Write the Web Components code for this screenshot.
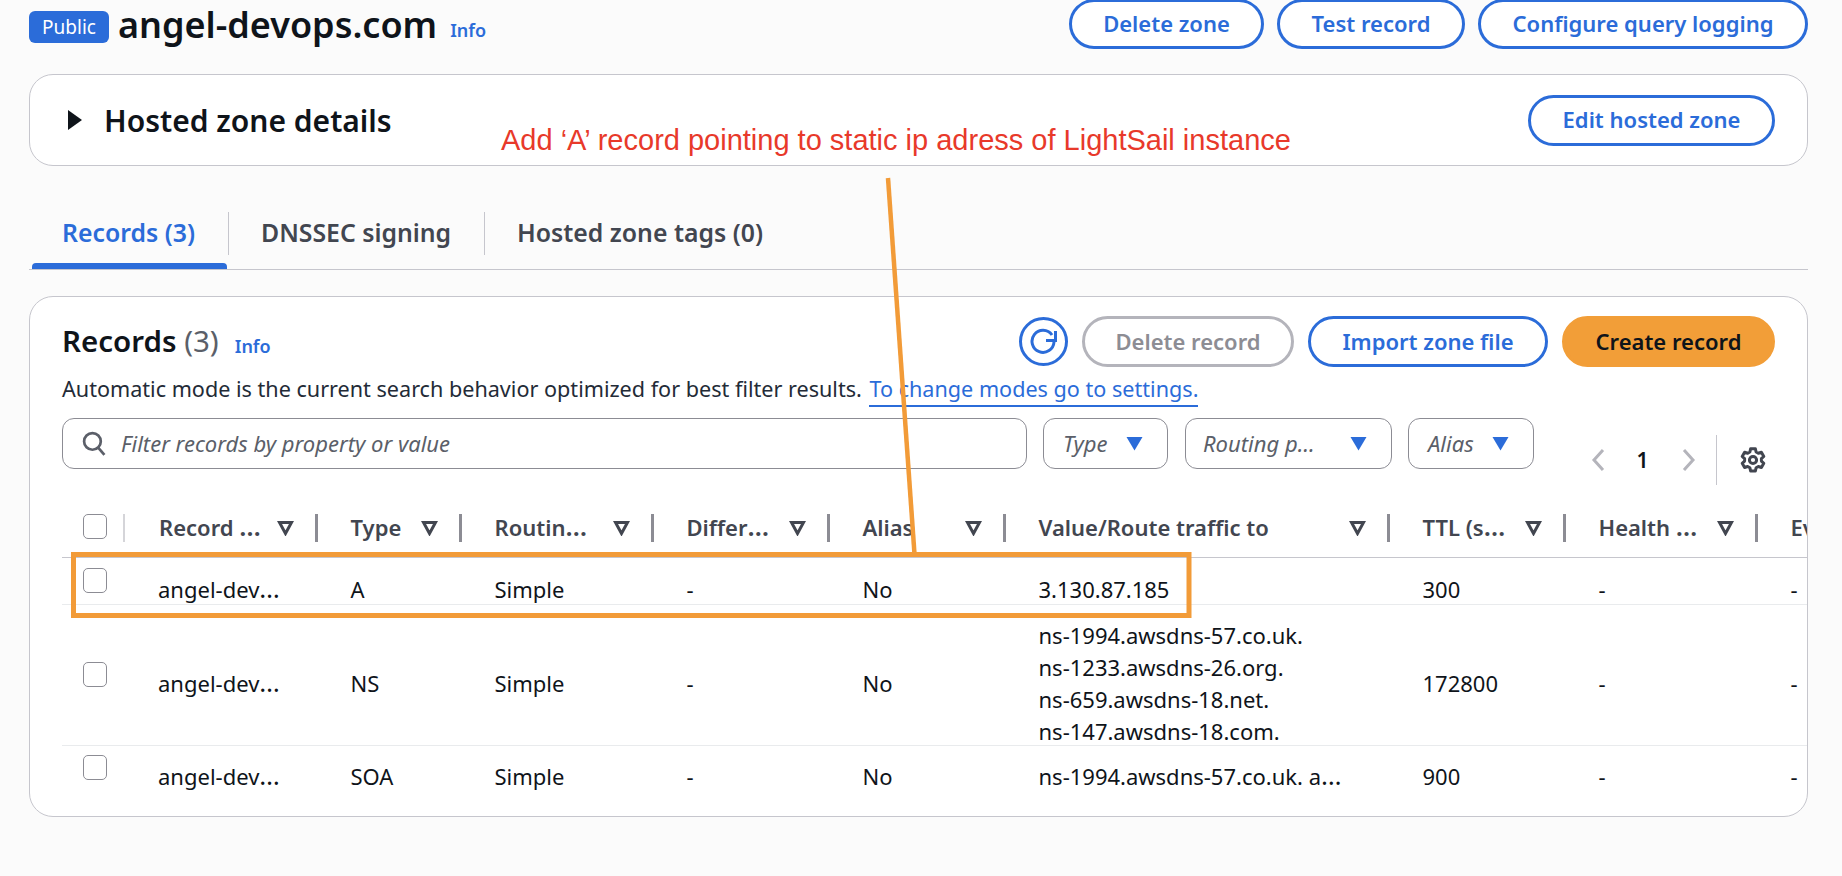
<!DOCTYPE html>
<html>
<head>
<meta charset="utf-8">
<style>
  html, body { margin: 0; height: 876px; overflow: hidden; background: #fbfbfb; }
  body { font-family: "Noto Sans", sans-serif; color: #0f141a; position: relative; }
  main { display: block; padding: 0 34px 0 29px; }
</style>
</head>
<body>
<main>
  <zone-header></zone-header>
  <zone-details></zone-details>
  <zone-tabs></zone-tabs>
  <records-card></records-card>
</main>
<route-note></route-note>

<script>
const blue = "#2b6cd9";

class AwsButton extends HTMLElement {
  constructor() {
    super();
    const shadow = this.attachShadow({ mode: "open" });
    shadow.innerHTML = `
      <style>
        :host {
          display: inline-flex;
          align-items: center;
          justify-content: center;
          box-sizing: border-box;
          height: var(--btn-h, 51px);
          padding-bottom: 2px;
          border: 3px solid ${blue};
          border-radius: 26px;
          background: #fff;
          color: ${blue};
          font-size: 22px;
          font-weight: 600;
          white-space: nowrap;
        }
        :host([kind="disabled"]) { border-color: #b4b4bb; color: #8d8d94; }
        :host([kind="primary"]) { border-color: #f29e38; background: #f29e38; color: #0f141a; }
      </style>
      <slot></slot>
    `;
  }
}

class AwsInfo extends HTMLElement {
  constructor() {
    super();
    this.attachShadow({ mode: "open" }).innerHTML = `
      <style>
        :host { display: inline-block; color: ${blue}; font-size: 18px; font-weight: 600; }
      </style>
      <slot>Info</slot>
    `;
  }
}

class ZoneHeader extends HTMLElement {
  constructor() {
    super();
    this.attachShadow({ mode: "open" }).innerHTML = `
      <style>
        :host { display: flex; align-items: flex-start; height: 74px; }
        .badge {
          width: 80px; height: 32px; margin-top: 11px;
          background: ${blue}; color: #fff; border-radius: 6px;
          display: flex; align-items: center; justify-content: center;
          font-size: 19px;
        }
        h1 { margin: 0 13px 0 9px; font-size: 36px; font-weight: 600; line-height: 50px; white-space: nowrap; }
        aws-info { margin-top: 18px; }
        .actions { margin-left: auto; display: flex; gap: 13px; margin-top: -1px; --btn-h: 50px; }
      </style>
      <span class="badge">Public</span>
      <h1>angel-devops.com</h1>
      <aws-info></aws-info>
      <div class="actions">
        <aws-button style="width:195px">Delete zone</aws-button>
        <aws-button style="width:188px">Test record</aws-button>
        <aws-button style="width:330px">Configure query logging</aws-button>
      </div>
    `;
  }
}

class ZoneDetails extends HTMLElement {
  constructor() {
    super();
    this.attachShadow({ mode: "open" }).innerHTML = `
      <style>
        :host {
          display: flex; align-items: center; box-sizing: border-box;
          height: 92px; padding: 0 32px 0 37px;
          background: #fff; border: 1px solid #c6c6cd; border-radius: 24px;
        }
        svg { width: 16px; height: 20px; margin-right: 21px; }
        h2 { margin: 0; font-size: 30px; font-weight: 600; }
        aws-button { margin-left: auto; width: 247px; }
      </style>
      <svg viewBox="0 0 16 20"><path d="M1 0 15 10 1 20z" fill="#0f141a"/></svg>
      <h2>Hosted zone details</h2>
      <aws-button>Edit hosted zone</aws-button>
    `;
  }
}

class ZoneTabs extends HTMLElement {
  constructor() {
    super();
    this.attachShadow({ mode: "open" }).innerHTML = `
      <style>
        :host {
          display: flex; box-sizing: border-box; height: 104px; padding: 46px 0 0 3px;
          border-bottom: 1px solid #c6c6cd; margin-bottom: 26px;
          font-size: 24.8px; font-weight: 600; color: #424650; white-space: nowrap;
        }
        .tab { height: 43px; box-sizing: border-box; display: flex; align-items: center; padding: 0 32px 3px; border-right: 1px solid #c6c6cd; }
        .tab:last-child { border: 0; }
        .tab.on { color: ${blue}; position: relative; }
        .tab.on::after {
          content: ""; position: absolute; left: 0; right: 1px; bottom: -14px; height: 6px;
          background: ${blue}; border-radius: 4px 4px 0 0;
        }
      </style>
      <div class="tab on" style="width:197px;padding-left:30px">Records (3)</div>
      <div class="tab" style="width:256px">DNSSEC signing</div>
      <div class="tab">Hosted zone tags (0)</div>
    `;
  }
}

class RecordsCard extends HTMLElement {
  constructor() {
    super();
    this.attachShadow({ mode: "open" }).innerHTML = `
      <style>
        :host {
          display: block; box-sizing: border-box; height: 521px; padding: 19px 0 0 32px;
          background: #fff; border: 1px solid #c6c6cd; border-radius: 24px; overflow: hidden;
        }
        .top { display: flex; align-items: center; height: 51px; padding-right: 32px; }
        h2 { margin: 0 16px 0 0; font-size: 29.5px; font-weight: 600; position: relative; top: -1px; }
        h2 span { font-weight: 400; color: #5b5f69; }
        aws-info { margin-top: 9px; }
        .acts { margin-left: auto; display: flex; gap: 14px; align-items: center; }
        .refresh { width: 49px; height: 49px; box-sizing: border-box; border: 3px solid ${blue}; border-radius: 50%; display: flex; align-items: center; justify-content: center; }
        .sub { font-size: 21.6px; line-height: 28px; margin-top: 8px; color: #232b37; white-space: nowrap; }
        .sub a { color: ${blue}; text-decoration: none; border-bottom: 2px solid ${blue}; margin-left: 2px; padding-bottom: 2px; }
        .filters { display: flex; margin-top: 15px; height: 51px; }
        .box {
          box-sizing: border-box; height: 51px; padding-bottom: 2px; border: 1px solid #8c8c94; border-radius: 12px;
          display: flex; align-items: center; font-style: italic; font-size: 22px; color: #5b5f69; white-space: nowrap;
          background: #fff;
        }
        .box svg { position: relative; top: 1px; }
        .search { width: 965px; padding-left: 19px; gap: 15px; }
        .sel { padding-left: 19px; padding-right: 24px; justify-content: space-between; }
      </style>
      <div class="top">
        <h2>Records <span>(3)</span></h2>
        <aws-info></aws-info>
        <div class="acts">
          <div class="refresh">
            <svg width="28" height="28" viewBox="0 0 28 28" fill="none" stroke="${blue}" stroke-width="3">
              <path d="M22 7A11 11 0 1 0 24 14"/><path d="M25.5 3v9.5H16"/>
            </svg>
          </div>
          <aws-button kind="disabled" style="width:212px">Delete record</aws-button>
          <aws-button style="width:240px">Import zone file</aws-button>
          <aws-button kind="primary" style="width:213px">Create record</aws-button>
        </div>
      </div>
      <div class="sub">Automatic mode is the current search behavior optimized for best filter results. <a>To change modes go to settings.</a></div>
      <div class="filters">
        <div class="box search">
          <svg width="24" height="25" viewBox="0 0 23 24" fill="none" stroke="#5b5f69" stroke-width="2.6"><circle cx="10" cy="10" r="8"/><path d="M15.5 16 21.5 23"/></svg>
          Filter records by property or value
        </div>
        <div class="box sel" style="width:125px;margin-left:16px">Type ${tri()}</div>
        <div class="box sel" style="width:207px;margin-left:17px;padding-left:17px">Routing p… ${tri()}</div>
        <div class="box sel" style="width:126px;margin-left:16px">Alias ${tri()}</div>
        <record-pager></record-pager>
      </div>
      <record-table></record-table>
    `;
  }
}

function tri() {
  return `<svg width="17" height="15" viewBox="0 0 17 15"><path d="M0.5 1H16.5L8.5 14.5z" fill="${blue}"/></svg>`;
}

class RecordPager extends HTMLElement {
  constructor() {
    super();
    this.attachShadow({ mode: "open" }).innerHTML = `
      <style>
        :host { display: flex; align-items: center; height: 50px; margin: 17px 0 0 57px; font-size: 21px; font-weight: 600; }
        svg { display: block; }
        .num { margin: 0 33px 0 31px; width: 13px; text-align: center; }
        .sep { width: 1px; height: 50px; background: #c6c6cd; margin: 0 23px 0 20px; }
      </style>
      <svg width="14" height="22" viewBox="0 0 14 22" fill="none" stroke="#b4b4bb" stroke-width="3"><path d="M12 1 3 11l9 10"/></svg>
      <span class="num">1</span>
      <svg width="14" height="22" viewBox="0 0 14 22" fill="none" stroke="#b4b4bb" stroke-width="3"><path d="M2 1l9 10-9 10"/></svg>
      <span class="sep"></span>
      <svg width="26" height="26" viewBox="0 0 26 26" fill="none" stroke="#424650" stroke-width="3" stroke-linejoin="round">
        <circle cx="13" cy="13" r="3.6"/>
        <path d="M10.6 1.8h4.8l.7 3.2 2.2 1.2 3.1-1 2.4 4.2-2.4 2.2v2.5l2.4 2.2-2.4 4.2-3.1-1-2.2 1.2-.7 3.2h-4.8l-.7-3.2-2.2-1.2-3.1 1-2.4-4.2 2.4-2.2v-2.5L2.2 9.4l2.4-4.2 3.1 1 2.2-1.2z"/>
      </svg>
    `;
  }
}

const columns = ["Record …", "Type", "Routin…", "Differ…", "Alias", "Value/Route traffic to", "TTL (s…", "Health …", "Ev"];
const rows = [
  ["angel-dev…", "A", "Simple", "-", "No", "3.130.87.185", "300", "-", "-"],
  ["angel-dev…", "NS", "Simple", "-", "No", ["ns-1994.awsdns-57.co.uk.", "ns-1233.awsdns-26.org.", "ns-659.awsdns-18.net.", "ns-147.awsdns-18.com."], "172800", "-", "-"],
  ["angel-dev…", "SOA", "Simple", "-", "No", "ns-1994.awsdns-57.co.uk. a…", "900", "-", "-"]
];
const gridCols = "63px 193px 144px 192px 176px 176px 384px 176px 192px 48px";

// the ellipsis sits wider in the reference than the font's own glyph
const dots = s => s.replace("…", `<span class="el">…</span>`);

class RecordTable extends HTMLElement {
  constructor() {
    super();
    const shadow = this.attachShadow({ mode: "open" });
    const head = columns.map((c, i) => `
      <div class="th">
        <span class="lbl">${dots(c)}</span>
        ${i < 8 ? `<svg width="17" height="15" viewBox="0 0 17 15" fill="none" stroke="#424650" stroke-width="3"><path d="M2.5 1.5H14.5L8.5 12.5z"/></svg>` : ""}
      </div>`).join("");
    const body = rows.map(r => `
      <div class="tr ${Array.isArray(r[5]) ? "tall" : ""}">
        <div class="td chk"><i class="box"></i></div>
        ${r.map(c => `<div class="td">${Array.isArray(c) ? c.map(l => `<div class="ln">${l}</div>`).join("") : `<span>${dots(c)}</span>`}</div>`).join("")}
      </div>`).join("");
    shadow.innerHTML = `
      <style>
        :host { display: block; margin-top: 45px; font-size: 22px; }
        .tr, .head { display: grid; grid-template-columns: ${gridCols}; box-sizing: border-box; }
        .head { height: 44px; border-bottom: 1px solid #c6c6cd; }
        .tr { height: 47px; grid-template-rows: minmax(0, 1fr); border-bottom: 1px solid #e9ebed; }
        .tr.tall { height: 141px; }
        .tr:last-child { height: 44px; border: 0; }
        .box { display: block; box-sizing: border-box; width: 24px; height: 25px; border: 1.5px solid #8c8c94; border-radius: 5px; background: #fff; }
        .chk0 { padding-left: 21px; height: 28px; border-right: 2px solid #d5d5d9; box-sizing: border-box; }
        .th {
          height: 28px; box-sizing: border-box; display: flex; align-items: center; justify-content: space-between;
          padding: 0 21px 0 32.5px; border-right: 3px solid #8c8c94; font-weight: 600; color: #424650; white-space: nowrap;
        }
        .th:nth-child(2) { padding-left: 34px; }
        .th:last-child { border: 0; padding-right: 0; }
        .lbl { position: relative; top: -1px; }
        .el { font-size: 26px; line-height: 0; }
        .td { padding: 16px 0 0 32.5px; min-height: 0; display: flex; flex-direction: column; justify-content: center; white-space: nowrap; color: #0f141a; }
        .td:nth-child(2) { padding-left: 33px; }
        .td.chk { padding: 0 0 2px 21px; }
        .ln { line-height: 32px; }
      </style>
      <div class="head"><div class="chk0"><i class="box"></i></div>${head}</div>
      ${body}
    `;
  }
}

class RouteNote extends HTMLElement {
  constructor() {
    super();
    this.attachShadow({ mode: "open" }).innerHTML = `
      <style>
        :host { position: absolute; inset: 0; display: block; pointer-events: none; }
        .txt { position: absolute; left: 501px; top: 124px; font: 29px "Liberation Sans", sans-serif; color: #e8392a; white-space: nowrap; }
        svg { position: absolute; left: 0; top: 0; }
      </style>
      <div class="txt">Add ‘A’ record pointing to static ip adress of LightSail instance</div>
      <svg width="1842" height="876" fill="none" stroke="#f29b38">
        <path d="M888 178 914.5 554" stroke-width="4.5"/>
        <rect x="73.5" y="554.5" width="1115.5" height="61" stroke-width="5"/>
      </svg>
    `;
  }
}

customElements.define("aws-button", AwsButton);
customElements.define("aws-info", AwsInfo);
customElements.define("zone-header", ZoneHeader);
customElements.define("zone-details", ZoneDetails);
customElements.define("zone-tabs", ZoneTabs);
customElements.define("record-pager", RecordPager);
customElements.define("record-table", RecordTable);
customElements.define("records-card", RecordsCard);
customElements.define("route-note", RouteNote);
</script>
</body>
</html>
